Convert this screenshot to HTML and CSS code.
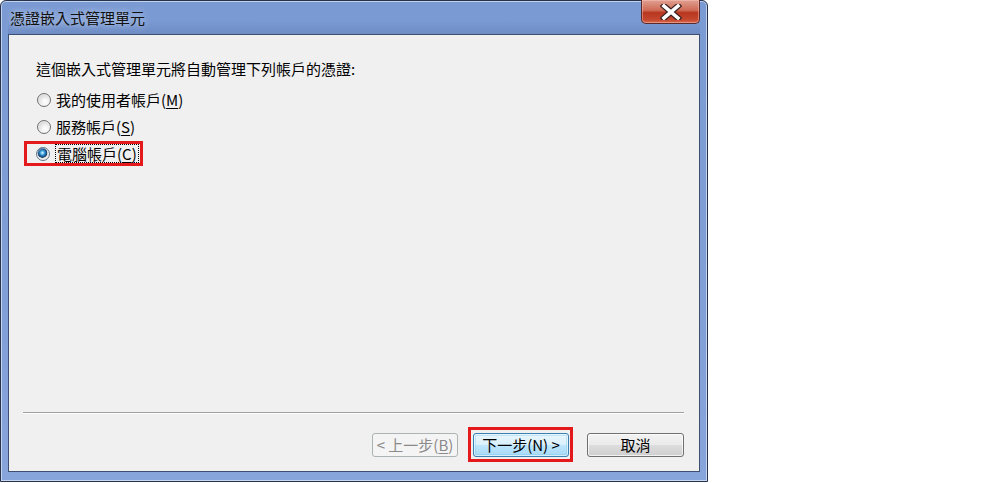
FILE: index.html
```html
<!DOCTYPE html>
<html lang="zh-Hant">
<head>
    <meta charset="UTF-8">
    <meta name="viewport" content="width=device-width, initial-scale=1.0">
    <title>憑證嵌入式管理單元</title>
    <link rel="stylesheet" href="styles.css">
</head>
<body>
    <div class="window">
        <div class="titlebar">
            <span class="title">憑證嵌入式管理單元</span>
            <button class="close" aria-label="關閉">
                <svg width="22" height="16" viewBox="0 0 22 16">
                    <path d="M4 2 L18 14 M18 2 L4 14" stroke="#3a2222" stroke-width="6" stroke-linecap="square"/>
                    <path d="M4 2 L18 14 M18 2 L4 14" stroke="#ffffff" stroke-width="3.6" stroke-linecap="square"/>
                </svg>
            </button>
        </div>

        <div class="client">
            <div class="content">
                <p class="prompt">這個嵌入式管理單元將自動管理下列帳戶的憑證:</p>
                <div class="options">
                    <label class="option">
                        <span class="radio"></span>
                        <span>我的使用者帳戶(<u>M</u>)</span>
                    </label>
                    <label class="option">
                        <span class="radio"></span>
                        <span>服務帳戶(<u>S</u>)</span>
                    </label>
                    <div class="option">
                        <label class="callout callout-option">
                            <span class="radio checked"></span>
                            <span class="focus">電腦帳戶(<u>C</u>)</span>
                        </label>
                    </div>
                </div>
            </div>

            <div class="footer">
                <div class="separator"></div>
                <div class="buttons">
                    <button class="btn btn-back" disabled>&lt; 上一步(<u>B</u>)</button>
                    <span class="callout callout-btn">
                        <button class="btn btn-next">下一步(N) &gt;</button>
                    </span>
                    <button class="btn btn-cancel">取消</button>
                </div>
            </div>
        </div>
    </div>
</body>
</html>
```

FILE: styles.css
```css
body {
    margin: 0;
    background: #fff;
    font-family: "Noto Sans CJK TC", "Liberation Sans", sans-serif;
    color: #000;
}

.window {
    width: 708px;
    height: 482px;
    box-sizing: border-box;
    border: 1px solid #26334d;
    border-radius: 6px 6px 0 0;
    background: linear-gradient(to bottom, #7a9ad3 0%, #7f9ed6 50%, #87a4db 100%);
    box-shadow: inset 0 0 0 1px rgba(255, 255, 255, 0.55);
    padding: 0 7px 9px 7px;
    display: flex;
    flex-direction: column;
}

.titlebar {
    height: 33px;
    display: flex;
    justify-content: space-between;
    align-items: flex-start;
    background: linear-gradient(to bottom, transparent 60%, rgba(70, 95, 150, 0.25) 100%);
}

.title {
    font-size: 15px;
    line-height: 18px;
    padding: 8px 0 0 2px;
    color: #111;
    text-shadow: 0 0 6px rgba(255, 255, 255, 0.7);
}

.close {
    width: 59px;
    height: 24px;
    margin-top: -1px;
    padding: 0;
    border: 1px solid #5a2a2a;
    border-top: none;
    border-radius: 0 0 5px 5px;
    background: linear-gradient(to bottom, #e0a092 0%, #cf6a55 45%, #b8361f 55%, #c4472e 85%, #d86a4e 100%);
    box-shadow: inset 0 0 0 1px rgba(255, 200, 190, 0.45);
    display: flex;
    align-items: center;
    justify-content: center;
}

.client {
    flex: 1;
    background: #f0f0f0;
    border: 1px solid #3d4e70;
    display: flex;
    flex-direction: column;
}

.content {
    flex: 1;
    padding: 25px 0 0 27px;
}

.prompt {
    margin: 0;
    font-size: 15px;
    line-height: 18px;
}

.options {
    margin-top: 8px;
    display: flex;
    flex-direction: column;
}

.option {
    height: 27px;
    padding-left: 1px;
    display: flex;
    align-items: center;
    font-size: 15px;
    line-height: 18px;
}

.option u,
.btn u {
    text-decoration-thickness: 1px;
    text-underline-offset: 2px;
}

.radio {
    width: 14px;
    height: 14px;
    margin-right: 5px;
    box-sizing: border-box;
    border: 1px solid #6f6f6f;
    border-radius: 50%;
    background: radial-gradient(circle at 60% 65%, #ffffff 0, #f4f4f4 30%, #cfcfcf 80%, #b4b4b4 100%);
    box-shadow: inset 0 0 0 1px rgba(255, 255, 255, 0.5);
    flex-shrink: 0;
}

.radio.checked {
    border-color: #62768c;
    background: radial-gradient(circle at 45% 40%, #e2f6ff 0, #7fcdf3 1.2px, #2a86c6 2.6px, #134a7e 4.2px, #0b2f55 4.6px, #dcdcdc 5.2px, #f6f6f6 100%);
}

.callout {
    border: 3px solid #e3191b;
    box-sizing: border-box;
}

.callout-option {
    margin-left: -13px;
    height: 25px;
    padding: 0 1px 0 9px;
    display: flex;
    align-items: center;
}

.focus {
    border: 1px dotted #000;
    padding: 0 1px;
    line-height: 17px;
}

.footer {
    padding: 0 15px 9px 14px;
}

.separator {
    height: 1px;
    background: #a0a0a0;
    border-bottom: 1px solid #fff;
}

.buttons {
    margin-top: 13px;
    display: flex;
    justify-content: flex-end;
    align-items: center;
}

.btn {
    height: 24px;
    padding: 0;
    font-family: "Noto Sans CJK TC", "Liberation Sans", sans-serif;
    font-size: 15px;
    line-height: 18px;
    color: #000;
    border: 1px solid #707070;
    border-radius: 3px;
    background: linear-gradient(to bottom, #f2f2f2 0%, #ebebeb 50%, #dddddd 51%, #cfcfcf 100%);
    box-shadow: inset 0 0 0 1px rgba(255, 255, 255, 0.7);
}

.btn-back {
    width: 86px;
    margin-right: 10px;
    color: #8a8a8a;
    border-color: #adb2b5;
    background: #f4f4f4;
    box-shadow: none;
}

.callout-btn {
    padding: 3px 1px 2px 2px;
    display: flex;
    margin-right: 14px;
}

.btn-next {
    width: 96px;
    border-color: #3c7fb1;
    background: linear-gradient(to bottom, #eaf6fd 0%, #d9f0fc 50%, #bee6fd 51%, #a7d9f5 100%);
    box-shadow: inset 0 0 0 1px rgba(255, 255, 255, 0.6), inset 0 0 0 2px rgba(120, 200, 240, 0.35);
}

.btn-cancel {
    width: 97px;
}
```
